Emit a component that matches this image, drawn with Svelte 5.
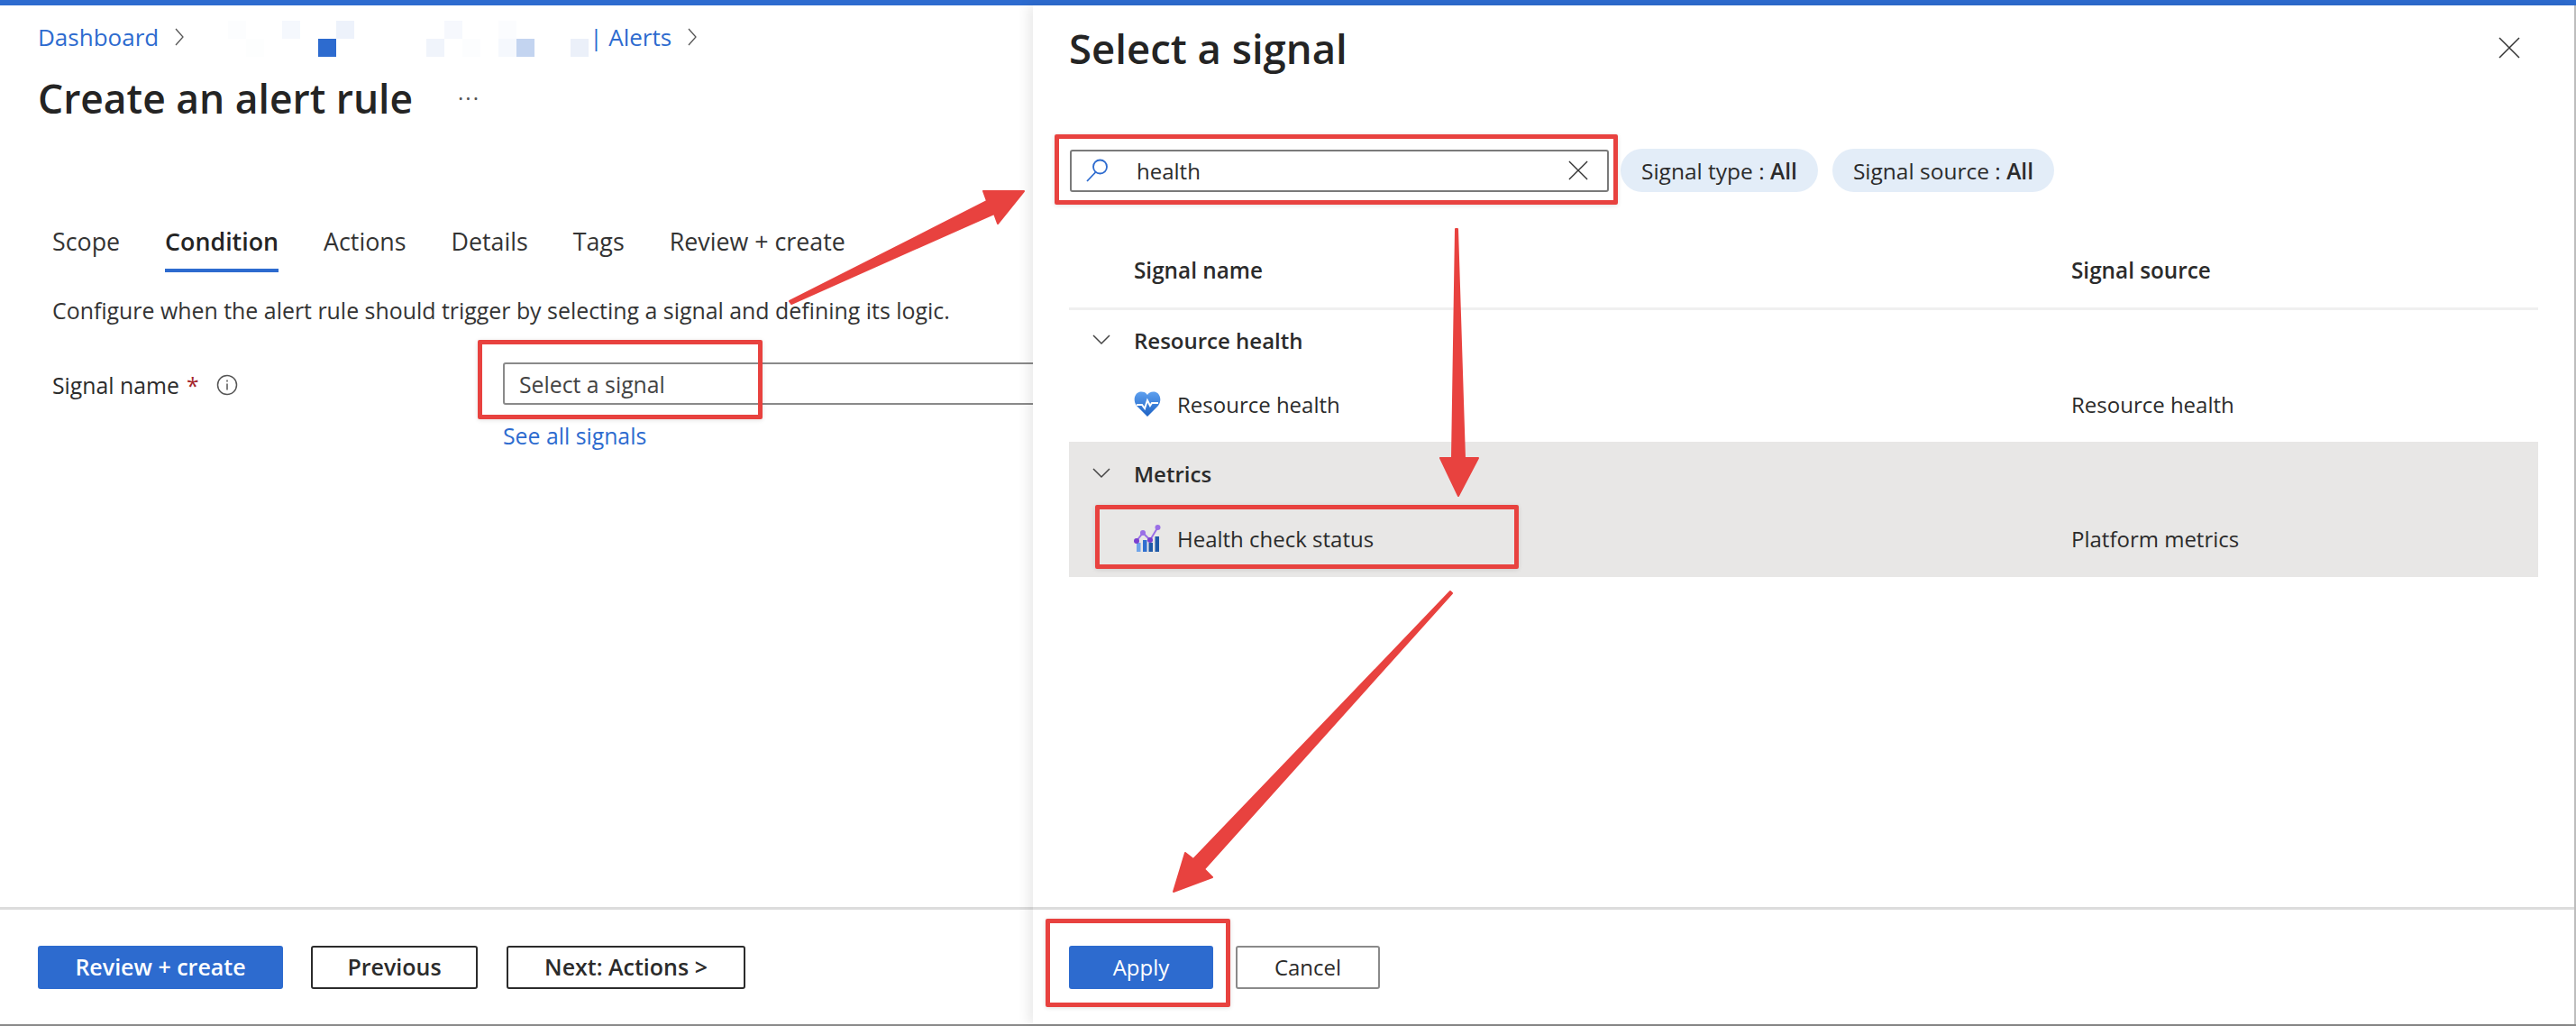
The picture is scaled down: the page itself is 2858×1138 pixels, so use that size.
<script>
  const tabs = ['Scope', 'Condition', 'Actions', 'Details', 'Tags', 'Review + create'];
  const blocks = [
    [253, 23, 20, 20, '#fcfdfe'], [273, 43, 20, 20, '#fdfefe'], [313, 23, 20, 20, '#f5f8fd'],
    [353, 43, 20, 20, '#2d6bcf'], [373, 23, 20, 20, '#edf2fb'], [473, 43, 20, 20, '#f0f4fb'],
    [493, 23, 20, 20, '#f6f8fd'], [513, 43, 20, 20, '#fcfdfe'], [553, 23, 20, 20, '#fbfcfe'],
    [553, 43, 20, 20, '#f5f8fd'], [573, 43, 20, 20, '#c3d4f0'], [633, 43, 20, 20, '#ebf0f9']
  ];
</script>

<div class="screen">
  <div class="topbar"></div>
  <div class="columns">
    <section class="page">
      <div class="page-body">
        <nav class="crumbs">
          <span class="link">Dashboard</span>
          <svg class="chev" viewBox="0 0 10 20"><path d="M1 1l8 9-8 9" /></svg>
          <span class="masked"></span>
          <span class="link alerts">| Alerts</span>
          <svg class="chev" viewBox="0 0 10 20"><path d="M1 1l8 9-8 9" /></svg>
        </nav>
        <div class="title-row">
          <h1>Create an alert rule</h1>
          <span class="more">···</span>
        </div>
        <div class="tabs">
          {#each tabs as tab}
            <span class="tab" class:active={tab === 'Condition'}>{tab}</span>
          {/each}
        </div>
        <p class="desc">Configure when the alert rule should trigger by selecting a signal and defining its logic.</p>
        <div class="field">
          <div class="label">
            Signal name <span class="req">*</span>
            <svg class="info" viewBox="0 0 24 24"><circle cx="12" cy="12" r="10.5" /><path d="M12 10.5v7M12 6.5v2" /></svg>
          </div>
          <div class="control">
            <div class="select">Select a signal</div>
            <span class="link see">See all signals</span>
          </div>
        </div>
      </div>
      <footer class="foot page-foot">
        <button class="btn primary wide">Review + create</button>
        <button class="btn dark prev">Previous</button>
        <button class="btn dark next">Next: Actions &gt;</button>
      </footer>
    </section>

    <section class="panel">
      <div class="panel-body">
        <div class="panel-head">
          <h2>Select a signal</h2>
          <svg class="close" viewBox="0 0 24 24"><path d="M1 1l22 22M23 1L1 23" /></svg>
        </div>
        <div class="filters">
          <div class="search">
            <svg class="glass" viewBox="0 0 26 26"><circle cx="16.5" cy="9" r="7.5" /><path d="M11.5 15L2 25" /></svg>
            <span class="query">health</span>
            <svg class="clear" viewBox="0 0 24 24"><path d="M1 1l22 22M23 1L1 23" /></svg>
          </div>
          <span class="pill">Signal type : <b>All</b></span>
          <span class="pill">Signal source : <b>All</b></span>
        </div>
        <div class="grid-row heads">
          <b>Signal name</b>
          <b>Signal source</b>
        </div>
        <div class="group-row first">
          <svg class="down" viewBox="0 0 20 12"><path d="M1 1l9 9 9-9" /></svg>
          <b>Resource health</b>
        </div>
        <div class="grid-row item">
          <div class="name">
            <svg class="ico" viewBox="0 0 30 30">
              <defs><linearGradient id="hg" x1="0" y1="0" x2="0" y2="1"><stop offset="0" stop-color="#5ea0ef" /><stop offset="1" stop-color="#1d62c4" /></linearGradient></defs>
              <path d="M15 29L3 17C-1 12 0 3 7 1.500c4-.5 6.500 1 8 3.500 1.500-2.500 4-4 8-3.500 7 1.500 8 10.500 4 15.500z" fill="url(#hg)" />
              <path d="M3 16h6l3 4 3-9 3 6 2-3h7" fill="none" stroke="#fff" stroke-width="2" />
            </svg>
            Resource health
          </div>
          <span>Resource health</span>
        </div>
        <div class="selected">
          <div class="group-row">
            <svg class="down" viewBox="0 0 20 12"><path d="M1 1l9 9 9-9" /></svg>
            <b>Metrics</b>
          </div>
          <div class="grid-row item tight">
            <div class="name">
              <svg class="ico" viewBox="0 0 30 30">
                <rect x="3" y="20" width="4.500" height="10" fill="#6fa4ea" />
                <rect x="10" y="17" width="4.500" height="13" fill="#2f6fd0" />
                <rect x="16.500" y="20" width="4.500" height="10" fill="#1f5aa8" />
                <rect x="23.500" y="13" width="4.500" height="17" fill="#1f5aa8" />
                <path d="M3 18L10 9l8 8L26.500 3" fill="none" stroke="#9a6fe6" stroke-width="2" />
                <circle cx="3" cy="18" r="3" fill="#7a3fd0" /><circle cx="10" cy="9" r="3" fill="#9a6fe6" />
                <circle cx="18" cy="17" r="3" fill="#7a3fd0" /><circle cx="26.500" cy="3" r="3" fill="#9a6fe6" />
              </svg>
              Health check status
            </div>
            <span>Platform metrics</span>
          </div>
        </div>
      </div>
      <footer class="foot panel-foot">
        <button class="btn primary apply">Apply</button>
        <button class="btn grey cancel">Cancel</button>
      </footer>
    </section>
  </div>
  <div class="bottomline"></div>

  {#each blocks as b}
    <span class="blk" style="left:{b[0]}px;top:{b[1]}px;width:{b[2]}px;height:{b[3]}px;background:{b[4]}"></span>
  {/each}

  <span class="mark" style="left:530px;top:377px;width:316px;height:88px"></span>
  <span class="mark" style="left:1170px;top:149px;width:625px;height:78px"></span>
  <span class="mark" style="left:1215px;top:560px;width:470px;height:71px"></span>
  <span class="mark" style="left:1160px;top:1019px;width:205px;height:98px"></span>

  <svg class="arrows" viewBox="0 0 2858 1138">
    <g fill="#e8423f" stroke="#e8423f" stroke-width="2" stroke-linejoin="round">
      <polygon points="876,334 1095,223 1091,212 1136,212 1107,248 1103,237 878,337" />
      <polygon points="1615,254 1617,254 1625,508 1640,508 1618,550 1598,508 1611,508" />
      <polygon points="1609,656 1611,658 1336,964 1345,973 1302,989 1315,946 1324,953" />
    </g>
  </svg>
</div>

<style>
  :global(body) { margin: 0; background: #fff; }
  .screen {
    position: relative;
    width: 2858px;
    height: 1138px;
    overflow: hidden;
    background: #fff;
    color: #2b2b2b;
    font-family: "Open Sans", "Noto Sans", sans-serif;
    font-size: 24px;
    display: flex;
    flex-direction: column;
  }
  .topbar { height: 6px; background: #2d6bcf; flex: none; }
  .columns { flex: 1; display: flex; min-height: 0; }
  .bottomline { height: 2px; background: #8a8a8a; flex: none; }

  .page { width: 1146px; flex: none; display: flex; flex-direction: column; overflow: hidden; }
  .page-body { flex: 1; padding: 0 0 0 42px; min-height: 0; }
  .crumbs { display: flex; align-items: center; height: 40px; margin-top: 15px; font-size: 26px; }
  .link { color: #2d6bcf; }
  .chev { width: 10px; height: 20px; margin-left: 18px; fill: none; stroke: #555; stroke-width: 1.300; flex: none; }
  .masked { width: 450px; }
  .title-row { display: flex; align-items: center; margin-top: 21px; height: 54px; }
  h1 { margin: 0; font-size: 44.400px; font-weight: 600; color: #242424; line-height: 54px; }
  .more { margin-left: 50px; font-size: 24px; letter-spacing: 2px; color: #555; line-height: 1; }
  .tabs { display: flex; gap: 50px; margin: 114px 0 0 16px; font-size: 26.800px; }
  .tab { height: 48px; line-height: 36px; border-bottom: 4px solid transparent; color: #333; }
  .tab.active { font-weight: 600; color: #242424; border-bottom-color: #2d6bcf; }
  .desc { margin: 24px 0 0 16px; line-height: 36px; color: #333; font-size: 24.900px; }
  .field { display: flex; margin: 40px 0 0 16px; font-size: 24.800px; }
  .label { width: 500px; height: 49px; display: flex; align-items: center; flex: none; }
  .req { color: #a4262c; margin-left: 8px; }
  .info { width: 24px; height: 24px; margin-left: 19px; fill: none; stroke: #555; stroke-width: 1.500; }
  .select {
    width: 700px; height: 47px; box-sizing: border-box;
    border: 2px solid #8a8a8a; border-radius: 3px;
    padding-left: 16px; display: flex; align-items: center; color: #444;
  }
  .see { display: block; line-height: 34px; margin-top: 17px; }

  .foot { display: flex; align-items: center; border-top: 3px solid #dcdcdc; height: 130px; box-sizing: border-box; flex: none; }
  .page-foot { padding: 0 0 0 42px; }
  .btn { height: 48px; font: inherit; border-radius: 3px; background: #fff; color: #2b2b2b; padding: 0 0 2px; box-sizing: border-box; }
  .primary { background: #2d6bcf; border: none; color: #fff; }
  .dark { border: 2px solid #2b2b2b; font-weight: 600; font-size: 25px; }
  .grey { border: 2px solid #8a8a8a; }
  .wide { width: 272px; font-weight: 600; font-size: 25px; }
  .prev { width: 185px; margin-left: 31px; }
  .next { width: 265px; margin-left: 32px; }
  .panel-foot .btn { padding: 0; }

  .panel {
    flex: 1; position: relative; display: flex; flex-direction: column;
    box-shadow: -6px 0 12px rgba(0, 0, 0, .08);
    border-right: 2px solid #bdbdbd;
  }
  .panel-body { flex: 1; padding: 0 40px; min-height: 0; }
  .panel-head { display: flex; justify-content: space-between; align-items: center; height: 64px; margin: 15px 0 0 0; }
  h2 { margin: 0; font-size: 45.500px; font-weight: 600; color: #242424; }
  .close { width: 24px; height: 24px; margin-right: 20px; fill: none; stroke: #333; stroke-width: 1.500; }
  .filters { display: flex; align-items: center; gap: 16px; margin: 80px 0 0 1px; font-size: 24.500px; }
  .search {
    width: 598px; height: 47px; box-sizing: border-box;
    border: 2px solid #7a7a7a; border-radius: 3px;
    display: flex; align-items: center; padding: 0 20px 0 15px;
    margin-right: -3px; flex: none; font-size: 24px;
  }
  .glass { width: 26px; height: 26px; fill: none; stroke: #2d6bcf; stroke-width: 1.800; flex: none; }
  .query { margin-left: 31px; flex: 1; }
  .clear { width: 24px; height: 22px; fill: none; stroke: #333; stroke-width: 1.500; }
  .pill { height: 48px; padding: 0 23px; background: #e3edf8; border-radius: 24px; display: flex; align-items: center; white-space: pre; }
  .pill b { font-weight: 600; }
  .grid-row { display: grid; grid-template-columns: 1040px 1fr; padding-left: 72px; align-items: center; }
  .heads { height: 80px; margin-top: 46px; padding-bottom: 2px; border-bottom: 3px solid #f0f0f0; font-size: 24.300px; }
  .heads b, .group-row b { font-weight: 600; color: #2b2b2b; }
  .group-row { display: flex; align-items: center; height: 70px; }
  .group-row.first { height: 66px; }
  .down { width: 20px; height: 12px; margin-left: 26px; margin-right: 26px; fill: none; stroke: #444; stroke-width: 1.500; flex: none; }
  .item { height: 76px; }
  .item.tight { height: 74px; }
  .name { display: flex; align-items: center; gap: 18px; }
  .ico { width: 30px; height: 30px; flex: none; }
  .selected { background: #e8e7e6; height: 150px; margin-top: 4px; }

  .panel-foot { padding-left: 40px; }
  .apply { width: 160px; }
  .cancel { width: 160px; margin-left: 25px; }

  .blk { position: absolute; }
  .mark { position: absolute; box-sizing: border-box; border: 5px solid #e8423f; border-radius: 2px; box-shadow: 0 1px 5px rgba(0, 0, 0, .12); }
  .arrows { position: absolute; left: 0; top: 0; width: 2858px; height: 1138px; pointer-events: none; }
</style>
